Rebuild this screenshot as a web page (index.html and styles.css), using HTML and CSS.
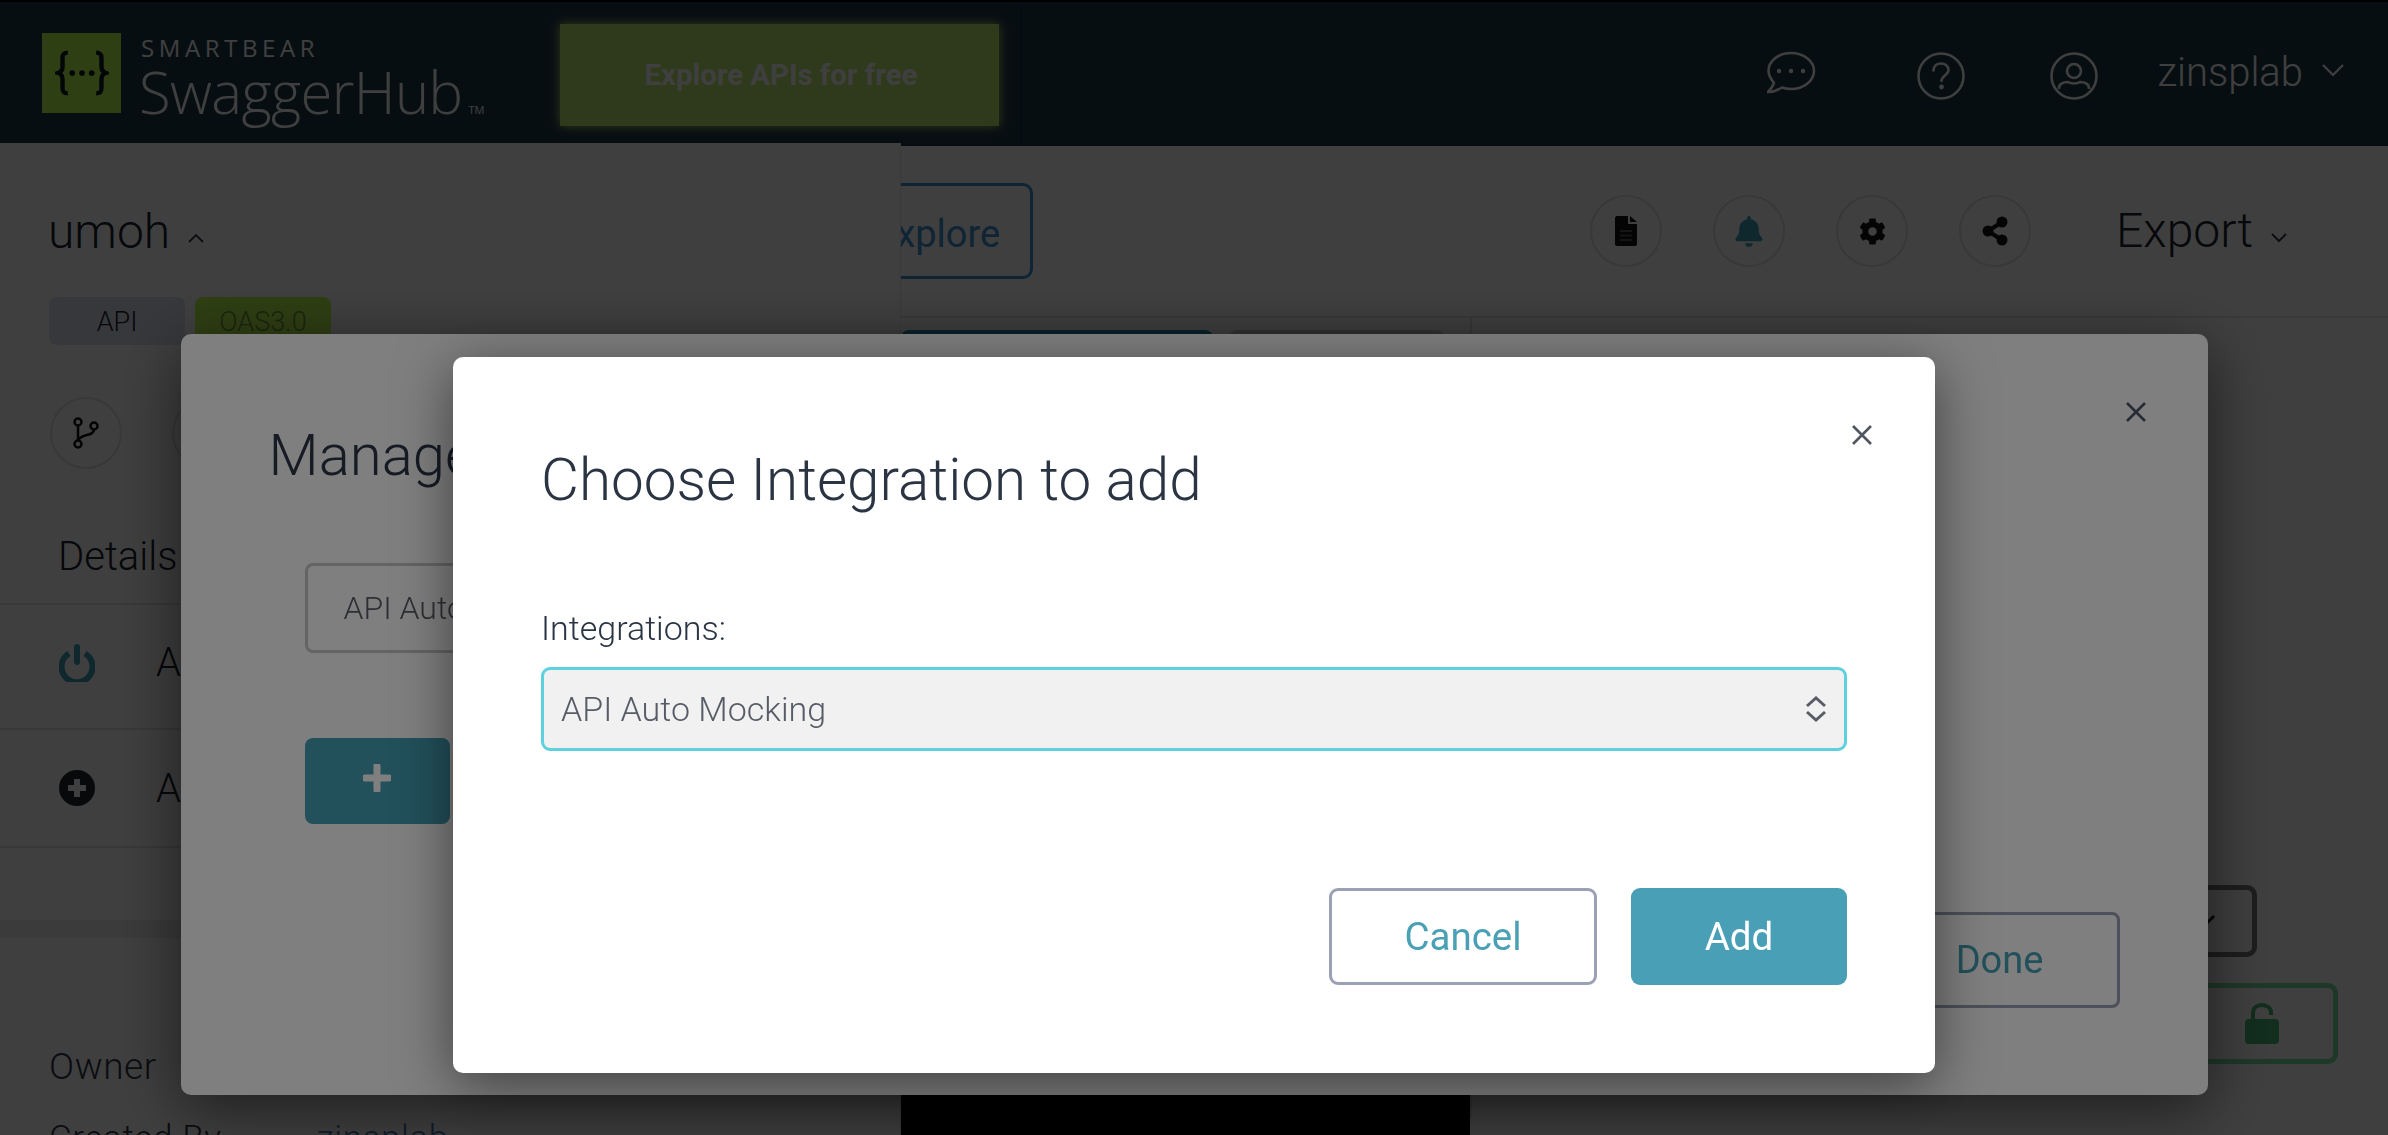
FILE: index.html
```html
<!DOCTYPE html>
<html lang="en">
<head>
<meta charset="utf-8">
<title>SwaggerHub</title>
<link rel="stylesheet" href="styles.css">
</head>
<body>
<div class="page">
  <header class="topbar">
    <div class="brand">
      <div class="logo-mark">
        <svg class="logo-braces" viewBox="0 0 60 52" width="54" height="46"><path d="M14 3C9 3 8 5 8 9V19C8 23 6 25 3 26C6 27 8 29 8 33V43C8 47 9 49 14 49M46 3C51 3 52 5 52 9V19C52 23 54 25 57 26C54 27 52 29 52 33V43C52 47 51 49 46 49" fill="none" stroke="#0b1a26" stroke-width="5"/><circle cx="19" cy="26" r="3.2" fill="#0b1a26"/><circle cx="30" cy="26" r="3.2" fill="#0b1a26"/><circle cx="41" cy="26" r="3.2" fill="#0b1a26"/></svg>
      </div>
      <div class="wordmark">
        <div class="wm-top">SMARTBEAR</div>
        <div class="wm-main">SwaggerHub<span class="wm-tm">TM</span></div>
      </div>
    </div>
    <a class="cta">Explore APIs for free</a>
    <div class="cta-divider"></div>
    <div class="top-actions">
      <svg class="ti ti-chat" viewBox="0 0 50 44" width="50" height="44"><g transform="translate(-17 -10)"><path d="M24 42C20 37 18.5 34 18.5 30C18.5 20 28.5 12 41 12C53.5 12 64 20 64 30C64 40 53.5 48 41 48C38 48 35 47.5 32 46.5C28 49 23 51 18 51C21 48 23 45 24 42Z" fill="none" stroke="#fff" stroke-width="2.6" stroke-linejoin="round"/><circle cx="29" cy="30" r="2.2" fill="#fff"/><circle cx="41" cy="30" r="2.2" fill="#fff"/><circle cx="53" cy="30" r="2.2" fill="#fff"/></g></svg>
      <svg class="ti ti-help" viewBox="0 0 48 48" width="48" height="48"><circle cx="24" cy="24" r="22.5" fill="none" stroke="#fff" stroke-width="2.6"/><path d="M16.5 18.5C16.5 14 20 11.5 24 11.5C28 11.5 31.5 14 31.5 18C31.5 23 24.5 23.5 24.5 29" fill="none" stroke="#fff" stroke-width="2.6" stroke-linecap="round"/><circle cx="24.5" cy="35" r="2.4" fill="#fff"/></svg>
      <svg class="ti ti-user" viewBox="0 0 48 48" width="48" height="48"><circle cx="24" cy="24" r="22.5" fill="none" stroke="#fff" stroke-width="2.6"/><circle cx="24" cy="19" r="7" fill="none" stroke="#fff" stroke-width="2.6"/><path d="M9 37C8.500 32 13 30 18 30C21 32 27 32 30 30C35 30 39.500 32 39 37" fill="none" stroke="#fff" stroke-width="2.6"/></svg>
      <span class="top-user">zinsplab</span>
      <svg class="top-chev" viewBox="0 0 24 14" width="24" height="14"><path d="M2 2L12 12L22 2" fill="none" stroke="#fff" stroke-width="2.2"/></svg>
    </div>
  </header>

  <div class="main">
    <aside class="sidebar">
      <div class="sb-head">
        <h2 class="sb-name">umoh</h2>
        <svg viewBox="0 0 18 12" width="18" height="12"><path d="M2 10L9 3L16 10" fill="none" stroke="#2d3748" stroke-width="1.800"/></svg>
      </div>
      <div class="sb-tags"><span class="tag tag-api">API</span><span class="tag tag-oas">OAS3.0</span></div>
      <div class="sb-tools">
        <span class="circle">
          <svg viewBox="0 0 28 32" width="28" height="32"><circle cx="6" cy="5" r="3.5" fill="none" stroke="#111" stroke-width="2.500"/><circle cx="6" cy="27" r="3.500" fill="none" stroke="#111" stroke-width="2.500"/><circle cx="22" cy="9" r="3.500" fill="none" stroke="#111" stroke-width="2.500"/><path d="M6 8.500V23.500M22 12.500C22 20 8 16 6 24" fill="none" stroke="#111" stroke-width="2.500"/></svg>
        </span>
        <span class="circle"></span>
      </div>
      <div class="sb-section">Details</div>
      <div class="sb-row sb-row-a">
        <svg viewBox="0 0 36 38" width="36" height="38"><path d="M10 9.500A15.500 15.500 0 1 0 26 9.500" fill="none" stroke="#3fa3b9" stroke-width="6"/><path d="M18 3V18" stroke="#3fa3b9" stroke-width="6" stroke-linecap="round"/></svg>
        <span>API Auto Mocking</span>
      </div>
      <div class="sb-row sb-row-b">
        <svg viewBox="0 0 36 36" width="36" height="36"><circle cx="18" cy="18" r="18" fill="#20242c"/><path d="M18 9V27M9 18H27" stroke="#fff" stroke-width="6"/></svg>
        <span>Add New Integration</span>
      </div>
      <div class="sb-band"></div>
      <div class="sb-owner">Owner</div>
      <div class="sb-created">Created By <a>zinsplab</a></div>
    </aside>

    <section class="editor-col">
      <div class="toolbar-left"><a class="explore">Explore</a></div>
      <div class="tabs"><span class="tab tab-on"></span><span class="tab tab-off"></span></div>
    </section>

    <section class="right-col">
      <div class="toolbar-right">
        <span class="circle"><svg viewBox="0 0 22 30" width="22" height="30"><path d="M2 0H13V8H22V28C22 29 21 30 20 30H2C1 30 0 29 0 28V2C0 1 1 0 2 0ZM15 0L22 6H15Z" fill="#111"/><path d="M5 15H17M5 19.500H17M5 24H17" stroke="#555" stroke-width="1.800"/></svg></span>
        <span class="circle"><svg viewBox="0 0 448 512" width="28" height="31"><path fill="#3fa3b9" d="M224 512c35.32 0 63.97-28.65 63.97-64H160.03c0 35.35 28.65 64 63.97 64zm215.39-149.71c-19.32-20.76-55.47-51.99-55.47-154.29 0-77.7-54.48-139.9-127.94-155.16V32c0-17.67-14.32-32-31.98-32s-31.98 14.33-31.98 32v20.84C118.56 68.1 64.08 130.3 64.08 208c0 102.3-36.15 133.53-55.47 154.29-6 6.45-8.66 14.16-8.61 21.71.11 16.4 12.98 32 32.1 32h383.8c19.12 0 32-15.6 32.1-32 .05-7.55-2.61-15.27-8.61-21.71z"/></svg></span>
        <span class="circle"><svg viewBox="0 0 512 512" width="27" height="27"><path fill="#111" d="M487.4 315.7l-42.6-24.6c4.3-23.2 4.3-47 0-70.2l42.6-24.6c4.9-2.8 7.1-8.6 5.5-14-11.1-35.6-30-67.8-54.7-94.6-3.8-4.1-10-5.1-14.8-2.3L380.8 110c-17.9-15.4-38.5-27.3-60.8-35.1V25.8c0-5.6-3.9-10.5-9.4-11.7-36.7-8.2-74.3-7.8-109.2 0-5.5 1.2-9.4 6.1-9.4 11.7V75c-22.2 7.9-42.8 19.8-60.8 35.1L88.7 85.5c-4.9-2.8-11-1.9-14.8 2.3-24.7 26.7-43.6 58.9-54.7 94.6-1.7 5.4.6 11.2 5.5 14L67.3 221c-4.3 23.2-4.3 47 0 70.2l-42.6 24.6c-4.9 2.8-7.1 8.6-5.5 14 11.1 35.6 30 67.8 54.7 94.6 3.8 4.1 10 5.1 14.8 2.3l42.6-24.6c17.9 15.4 38.5 27.3 60.8 35.1v49.2c0 5.6 3.9 10.5 9.4 11.7 36.7 8.2 74.3 7.8 109.2 0 5.5-1.2 9.4-6.1 9.4-11.7v-49.2c22.2-7.9 42.8-19.8 60.8-35.1l42.6 24.6c4.9 2.8 11 1.9 14.8-2.3 24.7-26.7 43.6-58.9 54.7-94.6 1.5-5.5-.7-11.3-5.6-14.1zM256 336c-44.1 0-80-35.9-80-80s35.9-80 80-80 80 35.9 80 80-35.900 80-80 80z"/></svg></span>
        <span class="circle"><svg viewBox="0 0 26 30" width="26" height="30"><path d="M20 6L6 15L20 24" fill="none" stroke="#111" stroke-width="4"/><circle cx="20" cy="6" r="5.500" fill="#111"/><circle cx="6" cy="15" r="5.500" fill="#111"/><circle cx="20" cy="24" r="5.500" fill="#111"/></svg></span>
        <span class="export">Export</span>
        <svg class="export-chev" viewBox="0 0 18 11" width="18" height="11"><path d="M2 2L9 9L16 2" fill="none" stroke="#2d3748" stroke-width="2"/></svg>
      </div>
      <div class="side-btns">
        <span class="btn-check"><svg viewBox="0 0 24 14" width="24" height="14"><path d="M2 2L12 12L22 2" fill="none" stroke="#111" stroke-width="3"/></svg></span>
        <span class="btn-lock"><svg viewBox="0 0 36 42" width="36" height="42"><path d="M9 18V10C9 5 13 2 18 2C23 2 27 5 27 10V12" fill="none" stroke="#49b876" stroke-width="4"/><rect x="1" y="16" width="34" height="25" rx="4" fill="#49b876"/></svg></span>
      </div>
    </section>
  </div>
</div>

<div class="backdrop backdrop-a">
  <div class="modal-manage">
    <h2 class="mm-title">Manage Integrations</h2>
    <svg class="mm-close" viewBox="0 0 22 22" width="22" height="22"><path d="M2 2L20 20M20 2L2 20" stroke="#4a5568" stroke-width="2.600"/></svg>
    <div class="mm-field">API Auto Mocking</div>
    <span class="mm-add"><svg viewBox="0 0 28 28" width="28" height="28"><path d="M14 2V26M2 14H26" stroke="#fff" stroke-width="7" stroke-linecap="round"/></svg></span>
    <div class="mm-foot"><a class="mm-done">Done</a></div>
  </div>
</div>

<div class="backdrop backdrop-b">
  <div class="modal-choose">
    <svg class="mc-close" viewBox="0 0 22 22" width="22" height="22"><path d="M2 2L20 20M20 2L2 20" stroke="#4f5662" stroke-width="2.600"/></svg>
    <h1 class="mc-title">Choose Integration to add</h1>
    <label class="mc-label">Integrations:</label>
    <div class="mc-select">
      <span>API Auto Mocking</span>
      <svg viewBox="0 0 22 26" width="22" height="26"><path d="M2 10L11 2L20 10M2 16L11 24L20 16" fill="none" stroke="#575c66" stroke-width="3"/></svg>
    </div>
    <div class="mc-foot">
      <button class="btn btn-cancel">Cancel</button>
      <button class="btn btn-add">Add</button>
    </div>
  </div>
</div>
</body>
</html>
```

FILE: styles.css
```css
* { box-sizing: border-box; }
html, body { margin: 0; height: 100%; overflow: hidden; }
body { background: #fff; font-family: Roboto, "Liberation Sans", sans-serif; font-weight: 300; color: #2d3748; }
h1, h2 { margin: 0; font-weight: 300; }

.page { position: relative; z-index: 0; display: flex; flex-direction: column; height: 1135px; overflow: hidden; }

/* top bar */
.topbar { flex: none; height: 146px; background: #1e3848; border-top: 2px solid #000; display: flex; align-items: flex-start; }
.brand { display: flex; margin: 31px 0 0 42px; width: 518px; }
.logo-mark { width: 79px; height: 80px; background: #b8ff50; display: flex; align-items: center; justify-content: center; }
.wordmark { margin-left: 20px; font-family: "Open Sans", sans-serif; color: #fff; }
.wm-top { font-size: 24px; font-weight: 500; letter-spacing: 4.6px; line-height: 26px; margin-top: 2px; }
.wm-main { font-size: 58px; font-weight: 300; line-height: 62px; margin-left: -2px; letter-spacing: -.6px; }
.wm-tm { font-size: 11px; margin-left: 6px; letter-spacing: 0; font-weight: 400; }
.cta { margin-top: 22px; width: 439px; height: 102px; background: #b8e86c; box-shadow: 0 0 10px #b8e86c; display: flex; align-items: center; justify-content: center; color: #fff; font-size: 29.300px; font-weight: 700; padding-left: 3px; }
.cta-divider { width: 1px; height: 144px; background: #0e2a44; margin-left: 22px; }
.top-actions { margin-left: auto; display: flex; align-items: flex-start; height: 144px; padding-right: 43px; }
.ti { display: block; flex: none; }
.ti-chat { margin-top: 49px; }
.ti-help { margin: 50px 0 0 100px; }
.ti-user { margin: 50px 0 0 85px; }
.top-user { color: #fff; font-size: 40px; margin: 47px 0 0 59px; line-height: 48px; }
.top-chev { margin: 61px 0 0 18px; }

/* main */
.main { flex: 1; display: flex; min-height: 0; }
.sidebar { flex: none; width: 901px; margin-top: -3px; background: #fff; border-right: 1px solid #eaeaea; position: relative; z-index: 1; height: 1000px; }
.sb-head { display: flex; align-items: flex-end; gap: 17px; padding: 60px 0 0 48px; height: 118px; }
.sb-name { font-size: 48px; line-height: 58px; color: #1a202c; }
.sb-head svg { margin-bottom: 17px; }
.sb-tags { display: flex; gap: 10px; padding-left: 49px; margin-top: 36px; }
.tag { width: 136px; height: 48px; border-radius: 8px; display: flex; align-items: center; justify-content: center; font-size: 27px; padding-top: 2px; }
.tag-api { background: #dde2f0; color: #1a202c; }
.tag-oas { background: #bcff4c; color: #6a9a40; }
.sb-tools { display: flex; gap: 50px; padding-left: 50px; margin-top: 52px; }
.circle { flex: none; width: 72px; height: 72px; border-radius: 50%; border: 2.5px solid #e0e0e0; display: flex; align-items: center; justify-content: center; }
.sb-section { padding-left: 58px; margin-top: 64px; font-size: 40px; line-height: 48px; color: #1a202c; height: 70px; }
.sb-row { display: flex; align-items: center; gap: 61px; padding-left: 59px; border-top: 2px solid #e3e3e3; font-size: 40px; color: #1a202c; }
.sb-row-a { height: 125px; padding-bottom: 8px; }
.sb-row-b { height: 120px; border-bottom: 2px solid #e3e3e3; }
.sb-band { height: 18px; background: #ececec; margin-top: 72px; }
.sb-owner { padding-left: 49px; margin-top: 107px; font-size: 37px; line-height: 44px; color: #2d3748; letter-spacing: .6px; }
.sb-created { padding-left: 49px; margin-top: 28px; font-size: 35px; line-height: 44px; color: #2d3748; letter-spacing: .6px; white-space: nowrap; }
.sb-created a { color: #3c78b8; margin-left: 86px; }

.editor-col { flex: none; width: 569px; background: #000; }
.toolbar-left { height: 172px; background: #fff; border-bottom: 2px solid #e4e4e4; padding-top: 37px; }
.explore { display: flex; align-items: center; justify-content: center; margin-left: -59px; width: 191px; height: 96px; border: 3px solid #3c90d0; border-radius: 10px; color: #3c90d0; font-size: 38px; font-weight: 400; padding-top: 5px; }
.tabs { display: flex; gap: 16px; background: #fff; height: 62px; padding-top: 12px; }
.tab { display: block; height: 50px; border-radius: 8px 8px 0 0; }
.tab-on { width: 312px; background: #2a90b8; }
.tab-off { width: 215px; background: #ccc; }

.right-col { flex: 1; background: #fff; min-width: 0; }
.toolbar-right { height: 172px; border-bottom: 2px solid #e4e4e4; display: flex; align-items: center; justify-content: flex-end; gap: 51px; padding: 0 100px 0 0; }
.export { font-size: 48px; color: #1a202c; margin-left: 34px; line-height: 60px; }
.export-chev { margin: 12px 0 0 -34px; }
.side-btns { display: flex; flex-direction: column; align-items: flex-end; border-left: 2px solid #e4e4e4; height: 800px; padding-top: 567px; }
.btn-check { width: 107px; height: 72px; border: 5px solid #777; border-radius: 10px; margin-right: 131px; display: flex; align-items: center; justify-content: center; }
.btn-lock { width: 159px; height: 81px; border: 5px solid #7be0a0; border-radius: 10px; margin: 26px 50px 0 0; display: flex; align-items: center; justify-content: center; padding-left: 6px; }

/* dialogs */
.backdrop { position: fixed; inset: 0; display: flex; justify-content: center; align-items: flex-start; background: rgba(0,0,0,.5); }
.backdrop-a { z-index: 1; padding-top: 334px; }
.backdrop-b { z-index: 2; padding-top: 357px; }
.modal-manage { position: relative; width: 2027px; height: 761px; background: #fff; border-radius: 10px; box-shadow: 0 14px 64px rgba(0,0,0,.55); display: flex; flex-direction: column; align-items: flex-start; padding: 88px 88px 87px 88px; }
.mm-title { font-size: 58px; line-height: 66px; color: #2d3748; white-space: nowrap; }
.mm-close { position: absolute; top: 67px; right: 61px; }
.mm-field { margin: 75px 0 0 36px; width: 1300px; height: 90px; border: 3px solid #c8c8c8; border-radius: 8px; display: flex; align-items: center; padding-left: 36px; font-size: 32px; color: #5a5f68; }
.mm-add { margin: 85px 0 0 36px; width: 145px; height: 86px; border-radius: 8px; background: #45a0b6; display: flex; align-items: center; justify-content: center; padding-bottom: 6px; }
.mm-foot { margin-top: auto; align-self: stretch; display: flex; justify-content: flex-end; }
.mm-done { width: 240px; height: 96px; border: 3px solid #9ba1b5; border-radius: 8px; display: flex; align-items: center; justify-content: center; color: #45a0b6; font-size: 38px; font-weight: 400; }

.modal-choose { position: relative; width: 1482px; height: 716px; background: #fff; border-radius: 10px; box-shadow: 0 12px 56px rgba(0,0,0,.5); display: flex; flex-direction: column; padding: 90px 88px 88px; }
.mc-close { position: absolute; top: 67px; right: 62px; }
.mc-title { font-size: 58.400px; line-height: 66px; color: #2a3442; }
.mc-label { margin-top: 95px; font-size: 34px; line-height: 40px; color: #2a3442; }
.mc-select { margin-top: 19px; height: 84px; background: #f1f1f1; border: 3px solid #5dd1de; border-radius: 9px; display: flex; align-items: center; justify-content: space-between; padding: 0 17px 0 17px; font-size: 34px; color: #575c66; }
.mc-foot { margin-top: auto; display: flex; justify-content: flex-end; gap: 34px; }
.btn { height: 97px; border-radius: 9px; font-family: Roboto, sans-serif; font-size: 38.500px; font-weight: 400; cursor: pointer; }
.btn-cancel { width: 268px; background: #fff; border: 3px solid #9ba1b5; color: #4aa0b5; }
.btn-add { width: 216px; background: #499fb5; border: 0; color: #fff; }
```
